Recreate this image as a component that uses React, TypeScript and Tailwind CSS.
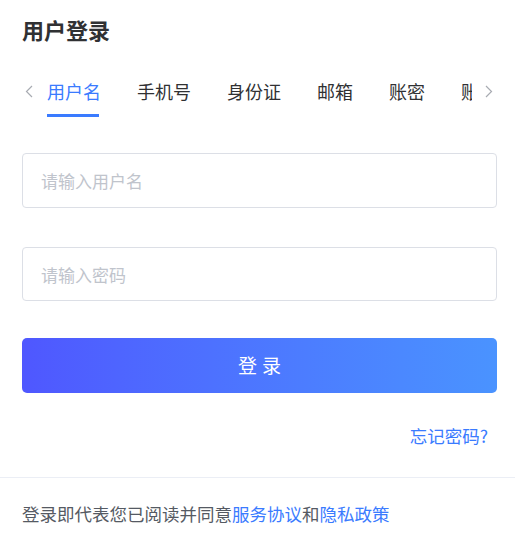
import { useState } from "react";

const tabs = ["用户名", "手机号", "身份证", "邮箱", "账密", "账号"];

const Chevron = ({ dir }: { dir: "left" | "right" }) => (
  <svg width="8" height="13" viewBox="0 0 8 13" fill="none">
    <polyline
      points={dir === "left" ? "7,1 1.5,6.5 7,12" : "1,1 6.5,6.5 1,12"}
      stroke="#a8abb2"
      strokeWidth="1.2"
    />
  </svg>
);

const App = () => {
  const [active, setActive] = useState<number>(0);

  return (
    <div
      className="w-[515px] h-[535px] bg-white overflow-hidden"
      style={{ fontFamily: '"Noto Sans CJK SC", "Noto Sans", sans-serif' }}
    >
      <div className="px-[22px] pt-[15px]">
        <h1 className="text-[22px] leading-[28px] font-bold text-[#303133]">用户登录</h1>
      </div>

      <div className="flex items-stretch pl-[22px] pr-[9px] mt-[27px] h-[47px]">
        <button className="w-[13px] flex items-center justify-start pl-[3px] pb-[4px]">
          <Chevron dir="left" />
        </button>
        <div className="w-[437px] overflow-hidden">
          <div className="flex gap-[36px] pl-[12px] h-full">
            {tabs.map((t, i) => (
              <div
                key={t}
                onClick={() => setActive(i)}
                className={`relative shrink-0 cursor-pointer text-[18px] leading-[24px] pt-[9px] whitespace-nowrap ${
                  i === active ? "text-[#3a7bff]" : "text-[#303133]"
                }`}
              >
                {t}
                {i === active && (
                  <span className="absolute left-0 right-[2px] bottom-0 h-[3px] bg-[#3a7bff]" />
                )}
              </div>
            ))}
          </div>
        </div>
        <button className="flex-1 flex items-center justify-center pb-[4px]">
          <Chevron dir="right" />
        </button>
      </div>

      <div className="pl-[22px] pr-[18px] pt-[36px] flex flex-col gap-[39px]">
        <input
          placeholder="请输入用户名"
          className="h-[55px] w-full rounded-[4px] border border-[#dcdfe6] px-[18px] text-[17px] text-[#303133] placeholder:text-[#c0c4cc] outline-none"
        />
        <input
          type="password"
          placeholder="请输入密码"
          className="h-[54px] w-full rounded-[4px] border border-[#dcdfe6] px-[18px] text-[17px] text-[#303133] placeholder:text-[#c0c4cc] outline-none"
        />
      </div>

      <div className="pl-[22px] pr-[18px] pt-[37px]">
        <button className="w-full h-[55px] rounded-[5px] bg-gradient-to-r from-[#4f57ff] to-[#4a93ff] text-white text-[19px] tracking-[5px] pl-[5px]">
          登录
        </button>
      </div>

      <div className="px-[27px] pt-[31px] pb-[29px] flex justify-end">
        <a className="text-[17.5px] leading-[24px] text-[#3a7bff] cursor-pointer">忘记密码?</a>
      </div>

      <div className="border-t border-[#ebeef5] px-[22px] pt-[23px]">
        <p className="text-[17.5px] leading-[26px] text-[#555a63]">
          登录即代表您已阅读并同意
          <a className="text-[#3a7bff] cursor-pointer">服务协议</a>和
          <a className="text-[#3a7bff] cursor-pointer">隐私政策</a>
        </p>
      </div>
    </div>
  );
};

export default App;
